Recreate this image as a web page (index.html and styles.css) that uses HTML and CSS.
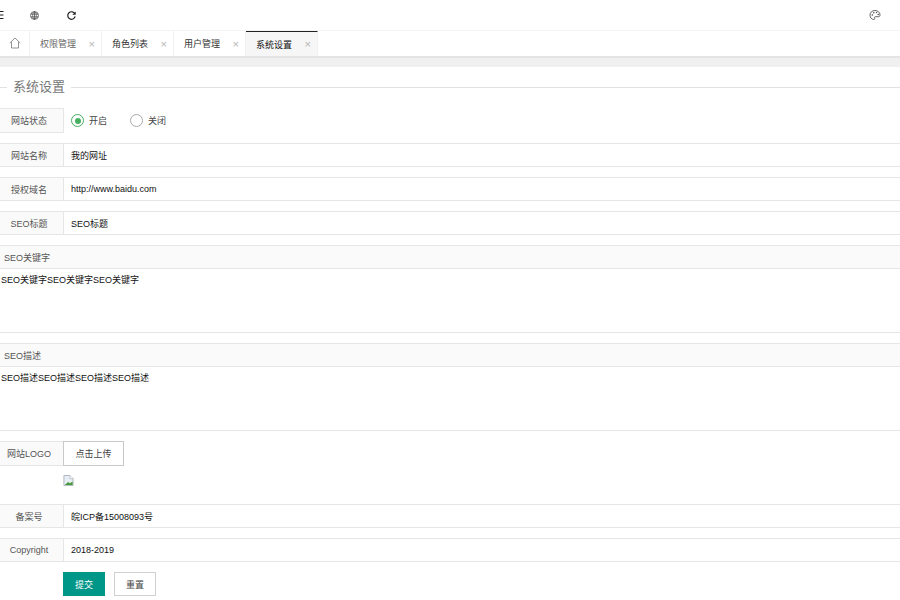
FILE: index.html
```html
<!DOCTYPE html>
<html lang="zh">
<head>
<meta charset="utf-8">
<title>系统设置</title>
<link rel="stylesheet" href="styles.css">
</head>
<body>
<header class="topbar">
  <div class="tools">
    <svg class="ic menu" viewBox="0 0 12 10"><path d="M-4 1.500H3.500M-4 5H3.500M-4 8.500H3.500" stroke="#222" stroke-width="1.100" fill="none"/></svg>
    <svg class="ic globe" viewBox="0 0 12 12"><g fill="none" stroke="#555" stroke-width=".9"><circle cx="6" cy="6" r="4.300"/><ellipse cx="6" cy="6" rx="2" ry="4.300"/><path d="M1.700 4.500H10.300M1.700 7.500H10.300M6 1.700V10.300"/></g></svg>
    <svg class="ic refresh" viewBox="0 0 12 12"><path d="M9.700 4.200A4.100 4.100 0 1 0 10 7" fill="none" stroke="#222" stroke-width="1.300"/><path d="M10.600 1.500V5.200H6.900Z" fill="#222"/></svg>
  </div>
  <svg class="ic palette" viewBox="0 0 12 12"><path d="M6 1.500C3 1.500 1 3.500 1 6.200C1 8.700 2.800 10.500 4.800 10.500C5.900 10.500 5.800 9.600 5.500 9C5.200 8.300 5.700 7.700 6.500 7.700H9.500C10.500 7.700 11 7.100 11 6C11 3.400 8.900 1.500 6 1.500Z" fill="none" stroke="#555" stroke-width=".9"/><circle cx="3.300" cy="6" r=".7" fill="#333"/><circle cx="4.800" cy="3.800" r=".7" fill="#333"/><circle cx="7.500" cy="3.600" r=".7" fill="#333"/><circle cx="9.200" cy="5.500" r=".7" fill="#333"/></svg>
</header>
<nav class="tabs">
  <div class="tab home"><svg class="home-ic" viewBox="0 0 12 12"><path d="M.8 6 6 1 11.200 6M2.500 5V11H9.500V5" fill="none" stroke="#777" stroke-width=".8"/></svg></div>
  <div class="tab muted"><span>权限管理</span><i class="close">×</i></div>
  <div class="tab"><span>角色列表</span><i class="close">×</i></div>
  <div class="tab"><span>用户管理</span><i class="close">×</i></div>
  <div class="tab active"><span>系统设置</span><i class="close">×</i></div>
</nav>
<div class="band"></div>
<main class="page">
  <div class="legend"><span>系统设置</span></div>
  <form class="form">
    <div class="row plain">
      <label class="label">网站状态</label>
      <div class="radios">
        <span class="radio on"><i></i>开启</span>
        <span class="radio"><i></i>关闭</span>
      </div>
    </div>
    <div class="row"><label class="label">网站名称</label><div class="value">我的网址</div></div>
    <div class="row"><label class="label">授权域名</label><div class="value">http://www.baidu.com</div></div>
    <div class="row"><label class="label">SEO标题</label><div class="value">SEO标题</div></div>
    <div class="block">
      <div class="block-title">SEO关键字</div>
      <div class="area">SEO关键字SEO关键字SEO关键字</div>
    </div>
    <div class="block">
      <div class="block-title">SEO描述</div>
      <div class="area">SEO描述SEO描述SEO描述SEO描述</div>
    </div>
    <div class="row plain upload">
      <label class="label">网站LOGO</label>
      <button type="button" class="btn">点击上传</button>
    </div>
    <div class="preview">
      <svg class="broken" viewBox="0 0 11 12"><path d="M.5.500H7L10.500 4V11.500H.5Z" fill="#e8eef5" stroke="#9aa3ad" stroke-width=".8"/><path d="M1.500 11 5 7.500 7 9 10 7V11Z" fill="#4a9a3c"/><path d="M7 .5V4H10.500" fill="#fff" stroke="#9aa3ad" stroke-width=".6"/></svg>
    </div>
    <div class="row"><label class="label">备案号</label><div class="value">皖ICP备15008093号</div></div>
    <div class="row"><label class="label">Copyright</label><div class="value">2018-2019</div></div>
    <div class="actions">
      <button type="button" class="btn primary">提交</button>
      <button type="button" class="btn ghost">重置</button>
    </div>
  </form>
</main>
</body>
</html>
```
FILE: styles.css
```css
* { box-sizing: border-box; }
html, body { margin: 0; padding: 0; height: 600px; overflow: hidden; background: #fff; }
body { font-family: "Liberation Sans", "Noto Sans CJK SC", sans-serif; font-size: 9px; color: #111; }

.topbar { height: 31px; display: flex; align-items: center; justify-content: space-between; border-bottom: 1px solid #f4f4f4; padding-right: 19px; }
.tools { display: flex; align-items: center; }
.ic { display: block; width: 12px; height: 12px; overflow: visible; }
.menu { width: 12px; height: 10px; margin-right: 17px; }
.globe { width: 11px; height: 11px; margin-right: 26px; }
.refresh { width: 11px; height: 11px; }
.palette { width: 12px; height: 12px; }

.tabs { height: 27px; display: flex; border-bottom: 2px solid #e4e4e4; }
.tab { width: 72px; height: 25px; display: flex; align-items: center; justify-content: space-between; padding: 0 6px 0 10px; border-right: 1px solid #f2f2f2; color: #333; }
.tab.muted { color: #666; }
.tab.home { width: 30px; justify-content: center; padding: 0; }
.home-ic { width: 12px; height: 12px; margin-top: -2px; }
.tab.active { background: #f6f6f6; color: #111; border-top: 1px solid #222; }
.close { font-style: normal; font-size: 11px; color: #b5b5b5; }

.band { height: 9px; background: #f0f0f0; }

.legend { margin-top: 12px; height: 16px; display: flex; align-items: center; padding-left: 7px; position: relative; }
.legend::before { content: ""; position: absolute; left: 0; right: 0; top: 8px; border-top: 1px solid #e2e2e2; }
.legend span { position: relative; background: #fff; padding: 0 6px; font-size: 13px; color: #777; line-height: 16px; }

.form { padding-top: 13px; }
.row { height: 24px; display: flex; margin-bottom: 10px; border-top: 1px solid #e6e6e6; border-bottom: 1px solid #e6e6e6; }
.label { width: 64px; flex: none; background: #fafafa; border-right: 1px solid #e6e6e6; color: #555; display: flex; align-items: center; justify-content: center; padding-right: 5px; }
.value { flex: 1; display: flex; align-items: center; padding-left: 7px; }
.row.plain { border: 0; height: 25px; }
.row.plain .label { border: 1px solid #e6e6e6; border-left: 0; }
.radios { display: flex; align-items: center; padding-left: 7px; color: #444; }
.radio { display: flex; align-items: center; margin-right: 23px; }
.radio i { width: 13px; height: 13px; border: 1px solid #aaa; border-radius: 50%; margin-right: 5px; display: block; position: relative; }
.radio.on i { border-color: #45b060; }
.radio.on i::after { content: ""; position: absolute; left: 2.500px; top: 2.500px; width: 6px; height: 6px; border-radius: 50%; background: #45b060; }

.block { margin-bottom: 10px; border-bottom: 1px solid #e6e6e6; }
.block-title { height: 24px; padding-left: 4px; background: #fafafa; border-top: 1px solid #e6e6e6; border-bottom: 1px solid #e6e6e6; color: #555; display: flex; align-items: center; }
.area { height: 63px; padding: 5px 1px; line-height: 12px; }

.upload { margin-bottom: 9px; }
.btn { font: inherit; background: #fff; }
.upload .btn { width: 61px; height: 25px; margin-left: -1px; border: 1px solid #c9c9c9; color: #444; padding: 0; }
.preview { padding-left: 63px; height: 29px; }
.broken { display: block; width: 11px; height: 11px; }

.actions { display: flex; padding-left: 63px; gap: 9px; }
.actions .btn { height: 24px; padding: 0; }
.primary { width: 42px; background: #009688; border: 1px solid #009688; color: #fff; }
.ghost { width: 42px; border: 1px solid #d0d0d0; color: #444; }
```
